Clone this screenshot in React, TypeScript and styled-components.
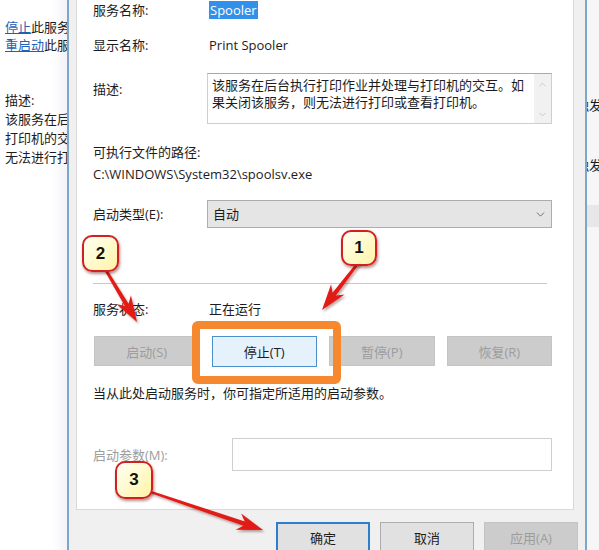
import React from 'react';
import styled, { createGlobalStyle } from 'styled-components';
import { ChevronDown, ChevronUp } from 'lucide-react';

const GlobalStyle = createGlobalStyle`
  html, body {
    margin: 0;
    padding: 0;
    background: #fff;
  }
  body {
    font-family: "Open Sans", "Noto Sans CJK SC", sans-serif;
    font-size: 13px;
    color: #1c1c1c;
  }
`;

const Page = styled.div`
  position: relative;
  display: flex;
  width: 599px;
  height: 550px;
  overflow: hidden;
`;

/* window behind the dialog, left side */
const BackWindow = styled.div`
  width: 67px;
  flex-shrink: 0;
  box-sizing: border-box;
  padding: 18px 0 0 5px;
  background: linear-gradient(to right, #fff 78%, #f3f2f8);
  overflow: hidden;
  white-space: nowrap;
  line-height: 18px;
`;

const LinkText = styled.span`
  color: #1f62b5;
  text-decoration: underline;
`;

const BackDesc = styled.div`
  margin-top: 37px;
  line-height: 19px;
`;

const RightWindow = styled.div`
  width: 12px;
  flex-shrink: 0;
  padding-top: 95px;
  background: #f6f6f6;
  overflow: hidden;
  white-space: nowrap;
  line-height: 20px;
`;

const Clipped = styled.div<{ $top?: number }>`
  margin-top: ${p => p.$top ?? 0}px;
  margin-left: -11px;
`;

const Band = styled.div`
  margin-top: 30px;
  height: 22px;
  background: #e7e7e7;
`;

/* the properties dialog */
const Frame = styled.div`
  flex: 1;
  display: flex;
  flex-direction: column;
  background: #f0f0f0;
  border-left: 2px solid #7ea6c9;
  border-right: 2px solid #7ea6c9;
  padding: 0 11px 0 7px;
`;

const Panel = styled.div`
  height: 510px;
  flex-shrink: 0;
  box-sizing: border-box;
  background: #fff;
  border: 1px solid #d9d9d9;
  border-top: none;
  padding: 0 21px 0 16px;
  display: flex;
  flex-direction: column;
`;

const Row = styled.div<{ $top: number; $h?: number; $start?: boolean }>`
  display: flex;
  align-items: ${p => (p.$start ? 'flex-start' : 'center')};
  margin-top: ${p => p.$top}px;
  min-height: ${p => p.$h ?? 20}px;
  line-height: 20px;
`;

const Label = styled.div<{ $w?: number; $pad?: number; $disabled?: boolean }>`
  width: ${p => p.$w ?? 114}px;
  flex-shrink: 0;
  padding-top: ${p => p.$pad ?? 0}px;
  color: ${p => (p.$disabled ? '#9d9d9d' : '#1c1c1c')};
`;

const Value = styled.div`
  padding-left: 2px;
  white-space: nowrap;
`;

const Selected = styled.span`
  display: inline-block;
  background: #3390ea;
  color: #fff;
  line-height: 18px;
  padding: 0 1px;
`;

const DescBox = styled.div`
  flex: 1;
  height: 51px;
  box-sizing: border-box;
  display: flex;
  border: 1px solid #cfcfcf;
  border-top-color: #a9a9a9;
`;

const DescText = styled.div`
  flex: 1;
  padding: 3px 0 0 4px;
  line-height: 17px;
  white-space: nowrap;
`;

const ScrollBar = styled.div`
  width: 17px;
  display: flex;
  flex-direction: column;
  align-items: center;
  justify-content: space-between;
  padding: 5px 0 3px;
  background: #f1f1f1;
  color: #bdbdbd;
`;

const Select = styled.div`
  flex: 1;
  height: 28px;
  box-sizing: border-box;
  display: flex;
  align-items: center;
  justify-content: space-between;
  padding: 0 4px 0 5px;
  background: #e5e5e5;
  border: 1px solid #adadad;
  color: #1c1c1c;
`;

const Separator = styled.div`
  margin-top: 55px;
  margin-right: 5px;
  height: 1px;
  background: #cacaca;
`;

const ButtonRow = styled.div`
  display: grid;
  grid-template-columns: repeat(4, 1fr);
  gap: 12px;
  margin-top: 17px;
  padding-left: 1px;
`;

const Button = styled.div<{ $variant?: 'disabled' | 'hover' | 'default' | 'normal' }>`
  height: ${p => (p.$variant === 'hover' ? 31 : 30)}px;
  box-sizing: border-box;
  display: flex;
  align-items: center;
  justify-content: center;
  background: ${p =>
    p.$variant === 'disabled' ? '#cccccc' : p.$variant === 'hover' ? '#e5f1fb' : '#e1e1e1'};
  border: ${p =>
    p.$variant === 'hover'
      ? '1px solid #4a90cf'
      : p.$variant === 'default'
      ? '2px solid #2b7fcb'
      : p.$variant === 'disabled'
      ? '1px solid #c4c4c4'
      : '1px solid #adadad'};
  color: ${p => (p.$variant === 'disabled' ? '#9c9c9c' : '#1c1c1c')};
`;

const Hint = styled.div`
  margin-top: 16px;
  line-height: 20px;
`;

const ParamInput = styled.div`
  flex: 1;
  height: 33px;
  box-sizing: border-box;
  border: 1px solid #cfcfcf;
  background: #fff;
`;

const Footer = styled.div`
  display: flex;
  justify-content: flex-end;
  gap: 10px;
  padding-top: 12px;
  margin-right: -4px;
`;

const FooterButton = styled(Button)`
  width: 94px;
  height: 30px;
`;

/* screenshot annotations laid over the dialog */
const Overlay = styled.div`
  position: absolute;
  inset: 0;
  pointer-events: none;
`;

const Highlight = styled.div`
  position: absolute;
  left: 192px;
  top: 321px;
  width: 149px;
  height: 63px;
  box-sizing: border-box;
  border: 8px solid #f6892f;
  border-radius: 6px;
`;

const Callout = styled.div<{ $x: number; $y: number; $s: number }>`
  position: absolute;
  left: ${p => p.$x}px;
  top: ${p => p.$y}px;
  width: ${p => p.$s}px;
  height: ${p => p.$s}px;
  box-sizing: border-box;
  display: flex;
  align-items: center;
  justify-content: center;
  border: 2.5px solid #d21f1f;
  border-radius: 10px;
  background: linear-gradient(135deg, #fffff4 0%, #fffbd2 45%, #fff2a6 100%);
  box-shadow: 1px 2px 3px rgba(90, 0, 0, 0.45);
  font-family: "Liberation Sans", Arial, sans-serif;
  font-weight: bold;
  font-size: 17px;
  color: #111;
`;

const ArrowLayer = styled.svg`
  position: absolute;
  left: 0;
  top: 0;
`;

type Pt = [number, number];

const arrowPoints = (s: Pt, t: Pt) => {
  const dx = t[0] - s[0];
  const dy = t[1] - s[1];
  const len = Math.hypot(dx, dy);
  const ux = dx / len;
  const uy = dy / len;
  const nx = -uy;
  const ny = ux;
  const head = 26;
  const wing = 8.5;
  const notch = 6;
  const w0 = 1.2;
  const w1 = 2.2;
  const bx = t[0] - ux * (head - notch);
  const by = t[1] - uy * (head - notch);
  const hx = t[0] - ux * head;
  const hy = t[1] - uy * head;
  const pts: Pt[] = [
    [s[0] + nx * w0, s[1] + ny * w0],
    [bx + nx * w1, by + ny * w1],
    [hx + nx * wing, hy + ny * wing],
    t,
    [hx - nx * wing, hy - ny * wing],
    [bx - nx * w1, by - ny * w1],
    [s[0] - nx * w0, s[1] - ny * w0],
  ];
  return pts.map(p => `${p[0].toFixed(1)},${p[1].toFixed(1)}`).join(' ');
};

const arrows: { from: Pt; to: Pt }[] = [
  { from: [362, 258], to: [322, 310] },
  { from: [101, 262], to: [137, 322] },
  { from: [145, 490], to: [263, 530] },
];

export default function App() {
  return (
    <>
      <GlobalStyle />
      <Page>
        <BackWindow>
          <div>
            <LinkText>停止</LinkText>此服务
          </div>
          <div>
            <LinkText>重启动</LinkText>此服务
          </div>
          <BackDesc>
            <div>描述:</div>
            <div>该服务在后台执行打印作业并处理与</div>
            <div>打印机的交互。如果关闭该服务，则</div>
            <div>无法进行打印或查看打印机。</div>
          </BackDesc>
        </BackWindow>

        <Frame>
          <Panel>
            <Row $top={0}>
              <Label>服务名称:</Label>
              <Value>
                <Selected>Spooler</Selected>
              </Value>
            </Row>
            <Row $top={15}>
              <Label>显示名称:</Label>
              <Value>Print Spooler</Value>
            </Row>
            <Row $top={18} $h={51} $start>
              <Label $pad={6}>描述:</Label>
              <DescBox>
                <DescText>
                  该服务在后台执行打印作业并处理与打印机的交互。如
                  <br />
                  果关闭该服务，则无法进行打印或查看打印机。
                </DescText>
                <ScrollBar>
                  <ChevronUp size={11} strokeWidth={1.6} />
                  <ChevronDown size={11} strokeWidth={1.6} />
                </ScrollBar>
              </DescBox>
            </Row>
            <Row $top={18}>
              <Label $w={200}>可执行文件的路径:</Label>
            </Row>
            <Row $top={2}>
              <div>C:\WINDOWS\System32\spoolsv.exe</div>
            </Row>
            <Row $top={16} $h={28}>
              <Label>启动类型(E):</Label>
              <Select>
                <span>自动</span>
                <ChevronDown size={13} strokeWidth={1.5} color="#555" />
              </Select>
            </Row>
            <Separator />
            <Row $top={15}>
              <Label>服务状态:</Label>
              <Value>正在运行</Value>
            </Row>
            <ButtonRow>
              <Button $variant="disabled">启动(S)</Button>
              <Button $variant="hover">停止(T)</Button>
              <Button $variant="disabled">暂停(P)</Button>
              <Button $variant="disabled">恢复(R)</Button>
            </ButtonRow>
            <Hint>当从此处启动服务时，你可指定所适用的启动参数。</Hint>
            <Row $top={35} $h={33}>
              <Label $w={139} $disabled>
                启动参数(M):
              </Label>
              <ParamInput />
            </Row>
          </Panel>
          <Footer>
            <FooterButton $variant="default">确定</FooterButton>
            <FooterButton $variant="normal">取消</FooterButton>
            <FooterButton $variant="disabled">应用(A)</FooterButton>
          </Footer>
        </Frame>

        <RightWindow>
          <Clipped>触发</Clipped>
          <Clipped $top={40}>触发</Clipped>
          <Band />
        </RightWindow>

        <Overlay>
          <Highlight />
          <ArrowLayer width="599" height="550" viewBox="0 0 599 550">
            <defs>
              <filter id="arrowShadow" x="-20%" y="-20%" width="140%" height="140%">
                <feDropShadow dx="1.5" dy="2" stdDeviation="1.2" floodColor="#400" floodOpacity="0.35" />
              </filter>
            </defs>
            {arrows.map((a, i) => (
              <polygon key={i} points={arrowPoints(a.from, a.to)} fill="#e11b12" filter="url(#arrowShadow)" />
            ))}
          </ArrowLayer>
          <Callout $x={341} $y={230} $s={36}>1</Callout>
          <Callout $x={82} $y={235} $s={37}>2</Callout>
          <Callout $x={115} $y={461} $s={38}>3</Callout>
        </Overlay>
      </Page>
    </>
  );
}
